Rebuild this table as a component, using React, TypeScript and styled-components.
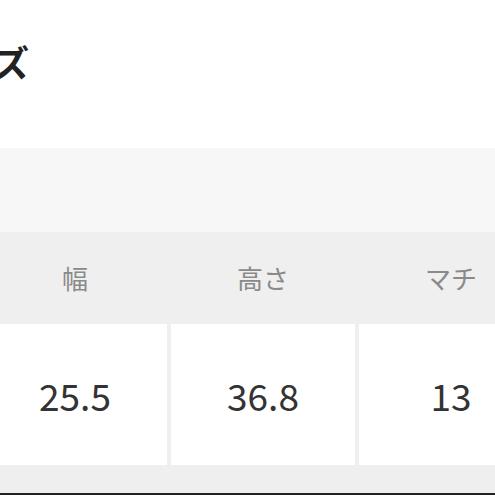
import React from 'react';
import styled, { createGlobalStyle } from 'styled-components';

const GlobalStyle = createGlobalStyle`
    html, body {
        margin: 0;
        padding: 0;
        background: #ffffff;
    }
    body {
        font-family: "Noto Sans CJK JP", "Noto Sans", sans-serif;
        overflow: hidden;
    }
`;

const Page = styled.div`
    width: 495px;
    height: 495px;
    overflow: hidden;
    display: flex;
    flex-direction: column;
    background: #ffffff;
`;

const Title = styled.h2`
    margin: 0 0 0 -78px;
    padding-top: 41px;
    height: 148px;
    flex-shrink: 0;
    box-sizing: border-box;
    font-size: 36px;
    line-height: 40px;
    font-weight: 700;
    color: #222222;
    white-space: nowrap;
`;

const Band = styled.div`
    height: 84px;
    flex-shrink: 0;
    background: #f7f7f7;
`;

const Table = styled.div`
    display: grid;
    grid-template-columns: repeat(3, 184px);
    grid-template-rows: 90px 141px 1fr;
    column-gap: 4px;
    row-gap: 2px;
    margin-left: -17px;
    flex: 1;
    background: #efefef;
`;

const Cell = styled.div<{ $head?: boolean }>`
    display: flex;
    align-items: center;
    justify-content: center;
    background: ${p => (p.$head ? '#efefef' : '#ffffff')};
    color: ${p => (p.$head ? '#8a8a8a' : '#333333')};
    font-size: ${p => (p.$head ? '26px' : '37px')};
    font-weight: 400;
`;

const Filler = styled.div`
    background: #efefef;
`;

const BottomEdge = styled.div`
    height: 2px;
    background: #222222;
    flex-shrink: 0;
`;

const headers = ['幅', '高さ', 'マチ'];
const values = ['25.5', '36.8', '13'];

export default function App() {
    return (
        <Page>
            <GlobalStyle />
            <Title>サイズ</Title>
            <Band />
            <Table>
                {headers.map(h => (
                    <Cell key={h} $head>{h}</Cell>
                ))}
                {values.map(v => (
                    <Cell key={v}>{v}</Cell>
                ))}
                {headers.map(h => (
                    <Filler key={'f' + h} />
                ))}
            </Table>
            <BottomEdge />
        </Page>
    );
}
